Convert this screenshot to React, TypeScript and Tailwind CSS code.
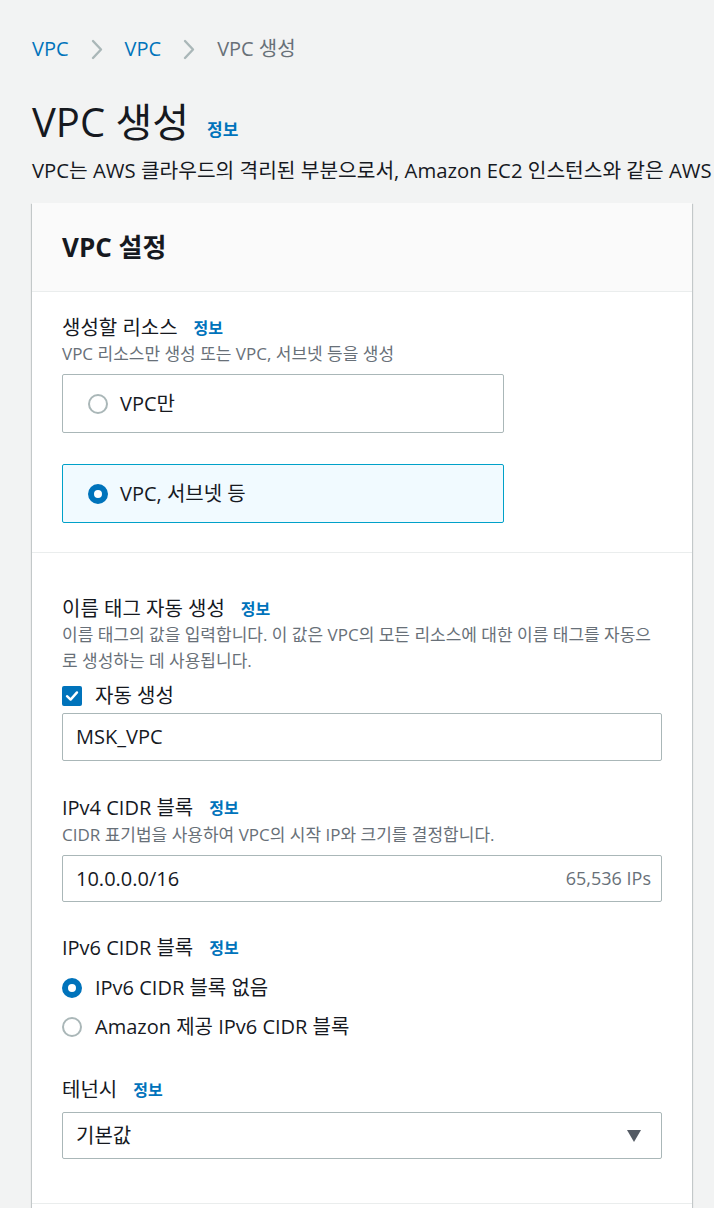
import React from "react";

const Info = ({ className = "" }: { className?: string }) => (
  <span className={`font-bold leading-none text-[#0073bb] ${className}`}>정보</span>
);

function Chevron() {
  return (
    <svg width="12" height="21" viewBox="0 0 12 21" fill="none">
      <path d="M2 2L10 10.5L2 19" stroke="#aab7b8" strokeWidth="2.4" strokeLinecap="round" strokeLinejoin="round" />
    </svg>
  );
}

function Radio({ checked }: { checked?: boolean }) {
  return checked ? (
    <span className="box-border block size-5 shrink-0 rounded-full border-[6px] border-[#0073bb] bg-white" />
  ) : (
    <span className="box-border block size-5 shrink-0 rounded-full border-2 border-[#aab7b8] bg-white" />
  );
}

function FieldLabel({ children }: { children: React.ReactNode }) {
  return (
    <div className="flex h-[26px] items-center text-[20px] leading-[26px]">
      <span>{children}</span>
      <Info className="ml-4 text-[16px]" />
    </div>
  );
}

function Tile({ label, checked }: { label: string; checked?: boolean }) {
  return (
    <div
      className={`flex h-[59px] w-[442px] items-center gap-3 rounded-[2px] border px-[25px] text-[20px] ${
        checked ? "border-[#00a1c9] bg-[#f1faff]" : "border-[#aab7b8] bg-white"
      }`}
    >
      <Radio checked={checked} />
      <span>{label}</span>
    </div>
  );
}

export default function App() {
  return (
    <div className="min-h-[1208px] w-full overflow-hidden bg-[#f2f3f3] font-['Open_Sans','Noto_Sans_CJK_KR',sans-serif] text-[#16191f]">
      <div className="pl-8 pr-[22px] pt-9">
        {/* Breadcrumbs */}
        <nav className="flex h-[26px] items-center gap-[22px] text-[20px] leading-[26px]">
          <span className="text-[#0073bb]">VPC</span>
          <Chevron />
          <span className="text-[#0073bb]">VPC</span>
          <Chevron />
          <span className="text-[#687078]">VPC 생성</span>
        </nav>

        {/* Page header */}
        <div className="mt-9 flex h-12 items-center">
          <h1 className="text-[40px] font-normal leading-[48px]">VPC 생성</h1>
          <Info className="ml-[18px] mt-[14px] text-[17px]" />
        </div>
        <p className="mt-[11px] whitespace-nowrap text-[20.3px] leading-[26px]">
          VPC는 AWS 클라우드의 격리된 부분으로서, Amazon EC2 인스턴스와 같은 AWS
        </p>

        {/* Card */}
        <div className="mt-5 w-[660px] bg-white shadow-[0_1px_1px_0_rgba(0,28,36,0.3),1px_1px_1px_0_rgba(0,28,36,0.15),-1px_1px_1px_0_rgba(0,28,36,0.15)]">
          <div className="flex h-[89px] items-center border-b border-[#eaeded] bg-[#fafafa] px-[30px]">
            <h2 className="text-[26px] font-bold">VPC 설정</h2>
          </div>

          {/* Resources to create */}
          <div className="border-b border-[#eaeded] px-[30px] pb-[29px] pt-[23px]">
            <FieldLabel>생성할 리소스</FieldLabel>
            <p className="text-[17px] leading-[26px] text-[#687078]">VPC 리소스만 생성 또는 VPC, 서브넷 등을 생성</p>
            <div className="mt-[7px] flex flex-col gap-[31px]">
              <Tile label="VPC만" />
              <Tile label="VPC, 서브넷 등" checked />
            </div>
          </div>

          {/* Settings */}
          <div className="border-b border-[#eaeded] px-[30px] pb-[44px] pt-[43px]">
            <FieldLabel>이름 태그 자동 생성</FieldLabel>
            <p className="text-[17px] leading-[26px] text-[#687078]">
              이름 태그의 값을 입력합니다. 이 값은 VPC의 모든 리소스에 대한 이름 태그를 자동으로 생성하는 데 사용됩니다.
            </p>
            <label className="mt-[9px] flex h-[26px] items-center gap-[13px] text-[20px]">
              <span className="flex size-5 items-center justify-center rounded-[2px] bg-[#0073bb]">
                <svg width="14" height="14" viewBox="0 0 14 14" fill="none">
                  <path d="M2 7.2L5.6 10.6L12 3.4" stroke="white" strokeWidth="2.4" strokeLinecap="round" strokeLinejoin="round" />
                </svg>
              </span>
              <span>자동 생성</span>
            </label>
            <div className="mt-1 flex h-12 items-center rounded-[2px] border border-[#aab7b8] px-[13px] text-[20px]">
              MSK_VPC
            </div>

            <div className="mt-[34px]">
              <FieldLabel>IPv4 CIDR 블록</FieldLabel>
            </div>
            <p className="mt-[1px] text-[17px] leading-[26px] text-[#687078]">
              CIDR 표기법을 사용하여 VPC의 시작 IP와 크기를 결정합니다.
            </p>
            <div className="mt-[7px] flex h-[47px] items-center justify-between rounded-[2px] border border-[#aab7b8] pl-[13px] pr-[10px]">
              <span className="text-[20px]">10.0.0.0/16</span>
              <span className="text-[18px] text-[#687078]">65,536 IPs</span>
            </div>

            <div className="mt-[33px]">
              <FieldLabel>IPv6 CIDR 블록</FieldLabel>
            </div>
            <div className="mt-[14px] flex h-[26px] items-center gap-[13px] text-[20px]">
              <Radio checked />
              <span>IPv6 CIDR 블록 없음</span>
            </div>
            <div className="mt-[13px] flex h-[26px] items-center gap-[13px] text-[20px]">
              <Radio />
              <span>Amazon 제공 IPv6 CIDR 블록</span>
            </div>

            <div className="mt-[37px]">
              <FieldLabel>테넌시</FieldLabel>
            </div>
            <div className="mt-[9px] flex h-[47px] items-center justify-between rounded-[2px] border border-[#aab7b8] pl-[13px] pr-[20px] text-[20px]">
              <span>기본값</span>
              <svg width="14" height="12" viewBox="0 0 14 12">
                <path d="M0 0H14L7 12Z" fill="#545b64" />
              </svg>
            </div>
          </div>

          <div className="h-24" />
        </div>
      </div>
    </div>
  );
}
